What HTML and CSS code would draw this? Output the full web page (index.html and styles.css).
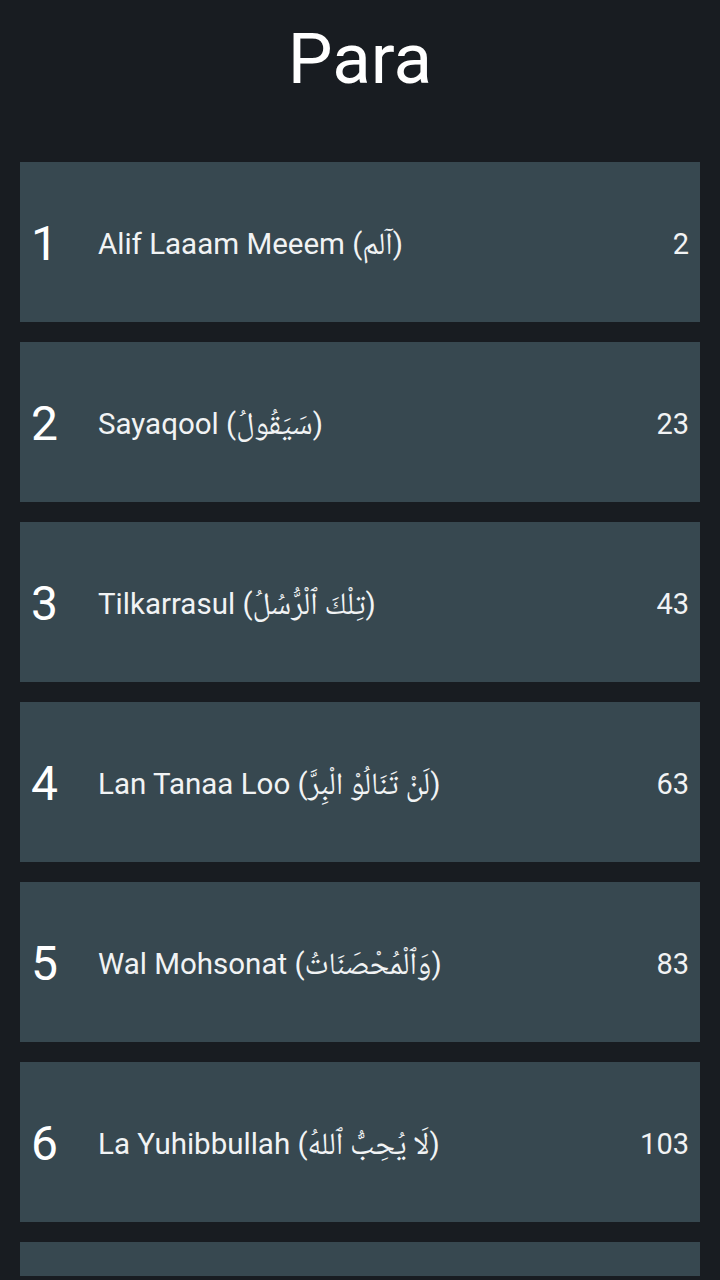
FILE: index.html
```html
<!DOCTYPE html>
<html lang="en">
<head>
<meta charset="utf-8">
<title>Para</title>
<link rel="stylesheet" href="styles.css">
</head>
<body>
<div class="app">
  <header class="header">
    <h1 class="title">Para</h1>
  </header>
  <main class="list">
    <div class="card"><span class="num">1</span><span class="name">Alif Laaam Meeem (<span class="ar">آلم</span>)</span><span class="page">2</span></div>
    <div class="card"><span class="num">2</span><span class="name">Sayaqool (<span class="ar">سَيَقُولُ</span>)</span><span class="page">23</span></div>
    <div class="card"><span class="num">3</span><span class="name">Tilkarrasul (<span class="ar">تِلْكَ ٱلْرُّسُلُ</span>)</span><span class="page">43</span></div>
    <div class="card"><span class="num">4</span><span class="name">Lan Tanaa Loo (<span class="ar">لَنْ تَنَالُوْ الْبِرَّ</span>)</span><span class="page">63</span></div>
    <div class="card"><span class="num">5</span><span class="name">Wal Mohsonat (<span class="ar">وَٱلْمُحْصَنَاتُ</span>)</span><span class="page">83</span></div>
    <div class="card"><span class="num">6</span><span class="name">La Yuhibbullah (<span class="ar">لَا يُحِبُّ ٱللهُ</span>)</span><span class="page">103</span></div>
    <div class="card"></div>
  </main>
</div>
</body>
</html>
```
FILE: styles.css
```css
html, body {
  margin: 0;
  padding: 0;
  background: #181c21;
}
body {
  font-family: Roboto, "Noto Sans", "DejaVu Sans", sans-serif;
  color: #f1f3f4;
}
.app {
  width: 720px;
  height: 1280px;
  overflow: hidden;
}
.header {
  height: 162px;
  display: flex;
  justify-content: center;
}
.title {
  margin: 0;
  padding-top: 14px;
  font-size: 71px;
  font-weight: 400;
  line-height: 90px;
  color: #ffffff;
}
.list {
  height: 1114px;
  overflow: hidden;
  padding: 0 20px;
  display: flex;
  flex-direction: column;
  gap: 20px;
}
.card {
  flex: 0 0 160px;
  background: #374850;
  display: flex;
  align-items: center;
  padding: 4px 11px 0 11px;
  box-sizing: border-box;
}
.num {
  width: 67px;
  font-size: 48px;
  line-height: 1;
  color: #ffffff;
}
.name {
  flex: 1;
  font-size: 29.5px;
  line-height: 36px;
}
.ar {
  font-family: "Noto Naskh Arabic", "Noto Sans Arabic", "DejaVu Sans", sans-serif;
  font-size: 31px;
  line-height: 0;
}
.page {
  font-size: 29px;
  line-height: 36px;
}
```
